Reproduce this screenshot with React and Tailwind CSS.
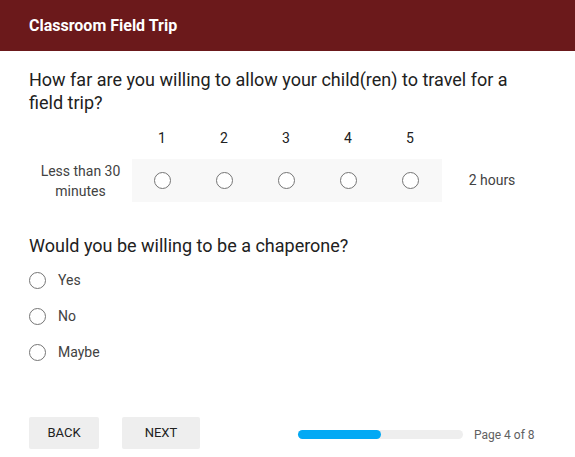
const scale = [1, 2, 3, 4, 5]
const choices = ['Yes', 'No', 'Maybe']

function Radio() {
  return <span className="block h-[17px] w-[17px] rounded-full border border-[#757575] bg-white" />
}

export default function App() {
  return (
    <div className="min-h-[457px] w-[575px] bg-white font-['Roboto',sans-serif] text-[#212121]">
      <header className="flex h-[51px] items-center bg-[#6b191b] px-[29px]">
        <h1 className="text-[16px] font-bold text-white">Classroom Field Trip</h1>
      </header>

      <main className="px-[29px]">
        <h2 className="mt-[17px] text-[18px] leading-[23px]">
          How far are you willing to allow your child(ren) to travel for a field trip?
        </h2>

        <div className="mt-[16px] grid grid-cols-[103px_repeat(5,62px)_100px] text-[14px]">
          <div />
          {scale.map((n) => (
            <div key={n} className="pr-[2px] text-center leading-[17px]">{n}</div>
          ))}
          <div />
        </div>

        <div className="mt-[12px] grid h-[43px] grid-cols-[103px_repeat(5,62px)_100px] items-center text-[14px]">
          <div className="text-center leading-[20px] text-[#424242]">Less than 30 minutes</div>
          {scale.map((n) => (
            <div key={n} className="flex h-full items-center justify-center bg-[#f8f8f8] pr-[2px]">
              <Radio />
            </div>
          ))}
          <div className="text-center text-[#424242]">2 hours</div>
        </div>

        <h2 className="mt-[32px] text-[18px] leading-[23px]">Would you be willing to be a chaperone?</h2>

        <div className="mt-[15px] flex flex-col gap-[19px]">
          {choices.map((c) => (
            <label key={c} className="flex items-center gap-[12px] text-[14px] leading-[17px] text-[#424242]">
              <Radio />
              <span>{c}</span>
            </label>
          ))}
        </div>

        <div className="mt-[56px] flex items-center">
          <button className="h-[32px] w-[70px] rounded-[2px] bg-[#eeeeee] text-[13px] text-[#212121]">BACK</button>
          <button className="ml-[23px] h-[32px] w-[78px] rounded-[2px] bg-[#eeeeee] text-[13px] text-[#212121]">NEXT</button>
          <div className="ml-[98px] mt-[3px] h-[9px] w-[165px] rounded-full bg-[#eeeeee]">
            <div className="h-full w-[83px] rounded-full bg-[#03a9f4]" />
          </div>
          <span className="ml-[11px] mt-[3px] text-[12px] text-[#616161]">Page 4 of 8</span>
        </div>
      </main>
    </div>
  )
}
